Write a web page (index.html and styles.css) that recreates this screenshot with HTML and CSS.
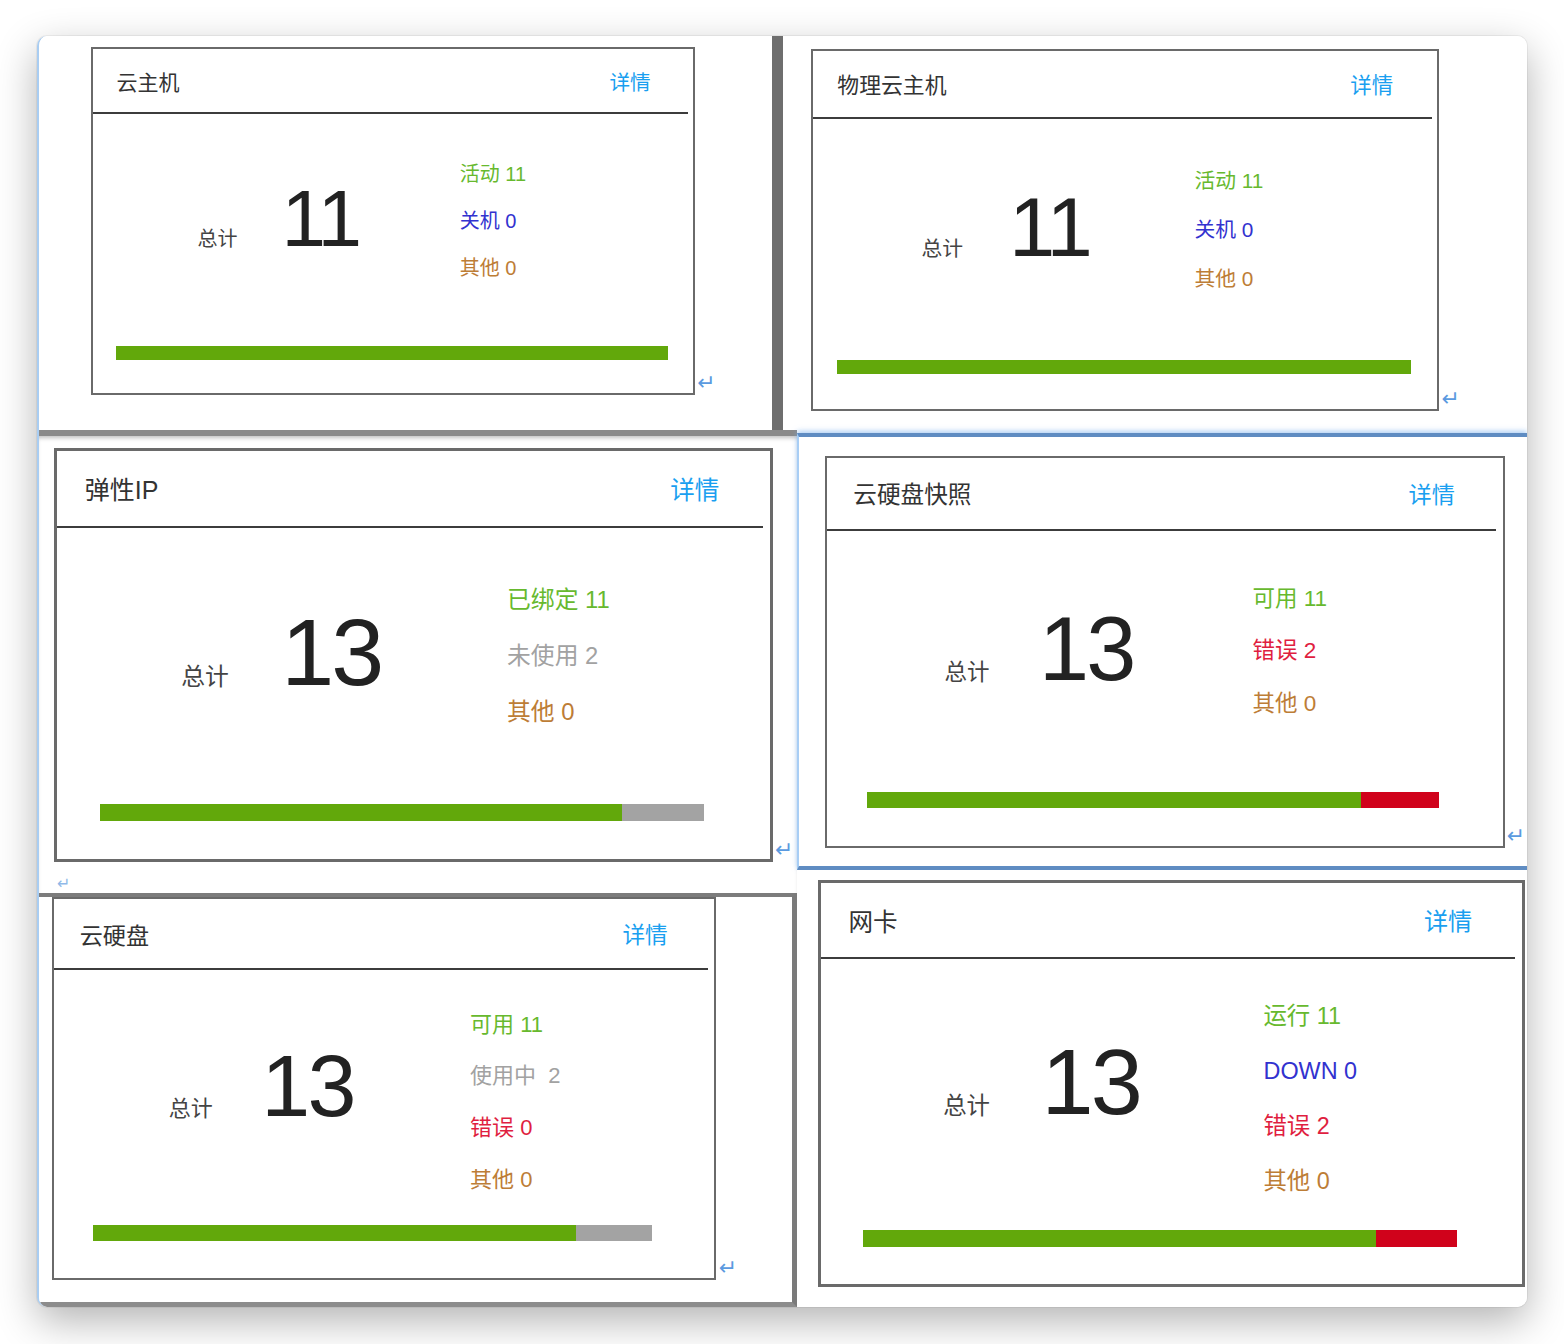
FILE: index.html
```html
<!DOCTYPE html>
<html lang="zh-CN">
<head>
    <meta charset="UTF-8">
    <meta name="viewport" content="width=device-width, initial-scale=1.0">
    <title>资源概览</title>
    <link rel="stylesheet" href="styles.css">
</head>
<body>
    <div class="window">
        <div class="row-top">
            <div class="shot shot-vm">
                <div class="card-wrap">
                    <div class="card card-vm">
                        <div class="card-head">
                            <span class="card-title">云主机</span>
                            <a href="#" class="card-link">详情</a>
                        </div>
                        <div class="card-body">
                            <div class="total">
                                <span class="total-label">总计</span>
                                <span class="total-num">11</span>
                            </div>
                            <div class="stats">
                                <div class="ok">活动 11</div>
                                <div class="off">关机 0</div>
                                <div class="other">其他 0</div>
                            </div>
                        </div>
                        <div class="bar">
                            <div class="seg-ok" style="width: 100%"></div>
                        </div>
                    </div>
                    <span class="para">↵</span>
                </div>
            </div>
            <div class="split"></div>
            <div class="shot shot-host">
                <div class="card-wrap">
                    <div class="card card-host">
                        <div class="card-head">
                            <span class="card-title">物理云主机</span>
                            <a href="#" class="card-link">详情</a>
                        </div>
                        <div class="card-body">
                            <div class="total">
                                <span class="total-label">总计</span>
                                <span class="total-num">11</span>
                            </div>
                            <div class="stats">
                                <div class="ok">活动 11</div>
                                <div class="off">关机 0</div>
                                <div class="other">其他 0</div>
                            </div>
                        </div>
                        <div class="bar">
                            <div class="seg-ok" style="width: 100%"></div>
                        </div>
                    </div>
                    <span class="para">↵</span>
                </div>
            </div>
        </div>

        <div class="row-bottom">
            <div class="col col-left">
                <div class="shot shot-eip">
                    <div class="card-wrap">
                        <div class="card card-alt card-eip">
                            <div class="card-head">
                                <span class="card-title">弹性IP</span>
                                <a href="#" class="card-link">详情</a>
                            </div>
                            <div class="card-body">
                                <div class="total">
                                    <span class="total-label">总计</span>
                                    <span class="total-num">13</span>
                                </div>
                                <div class="stats">
                                    <div class="ok">已绑定 11</div>
                                    <div class="idle">未使用 2</div>
                                    <div class="other">其他 0</div>
                                </div>
                            </div>
                            <div class="bar">
                                <div class="seg-ok" style="width: 86.5%"></div>
                                <div class="seg-idle"></div>
                            </div>
                        </div>
                        <span class="para">↵</span>
                    </div>
                    <span class="para para-faint">↵</span>
                </div>
                <div class="shot shot-disk">
                    <div class="card-wrap">
                        <div class="card card-alt card-disk">
                            <div class="card-head">
                                <span class="card-title">云硬盘</span>
                                <a href="#" class="card-link">详情</a>
                            </div>
                            <div class="card-body">
                                <div class="total">
                                    <span class="total-label">总计</span>
                                    <span class="total-num">13</span>
                                </div>
                                <div class="stats stats-long">
                                    <div class="ok">可用 11</div>
                                    <div class="idle">使用中&nbsp; 2</div>
                                    <div class="err">错误 0</div>
                                    <div class="other">其他 0</div>
                                </div>
                            </div>
                            <div class="bar">
                                <div class="seg-ok" style="width: 86.3%"></div>
                                <div class="seg-idle"></div>
                            </div>
                        </div>
                        <span class="para">↵</span>
                    </div>
                </div>
            </div>

            <div class="col col-right">
                <div class="shot shot-snap">
                    <div class="card-wrap">
                        <div class="card card-alt card-snap">
                            <div class="card-head">
                                <span class="card-title">云硬盘快照</span>
                                <a href="#" class="card-link">详情</a>
                            </div>
                            <div class="card-body">
                                <div class="total">
                                    <span class="total-label">总计</span>
                                    <span class="total-num">13</span>
                                </div>
                                <div class="stats">
                                    <div class="ok">可用 11</div>
                                    <div class="err">错误 2</div>
                                    <div class="other">其他 0</div>
                                </div>
                            </div>
                            <div class="bar">
                                <div class="seg-ok" style="width: 86.4%"></div>
                                <div class="seg-err"></div>
                            </div>
                        </div>
                        <span class="para">↵</span>
                    </div>
                </div>
                <div class="shot shot-nic">
                    <div class="card card-alt card-nic">
                        <div class="card-head">
                            <span class="card-title">网卡</span>
                            <a href="#" class="card-link">详情</a>
                        </div>
                        <div class="card-body">
                            <div class="total">
                                <span class="total-label">总计</span>
                                <span class="total-num">13</span>
                            </div>
                            <div class="stats stats-long">
                                <div class="ok">运行 11</div>
                                <div class="off">DOWN 0</div>
                                <div class="err">错误 2</div>
                                <div class="other">其他 0</div>
                            </div>
                        </div>
                        <div class="bar">
                            <div class="seg-ok" style="width: 86.3%"></div>
                            <div class="seg-err"></div>
                        </div>
                    </div>
                </div>
            </div>
        </div>
    </div>
</body>
</html>
```

FILE: styles.css
```css
html, body {
    margin: 0;
    height: 100%;
    overflow: hidden;
}
body {
    background-color: #fff;
    font-family: "Liberation Sans", "Noto Sans CJK SC", sans-serif;
}

/* the screenshot window */
.window {
    box-sizing: border-box;
    width: 1490px;
    height: 1271px;
    margin: 36px 37px;
    background-color: #fff;
    border-left: 2px solid #a9cdf2;
    border-radius: 10px;
    overflow: hidden;
    box-shadow: 0 0 0 1px rgba(0, 0, 0, 0.05), 0 14px 40px rgba(0, 0, 0, 0.3);
}
.row-top {
    display: flex;
    height: 394px;
}
.row-bottom {
    display: flex;
    height: 877px;
}
.col {
    display: flex;
    flex-direction: column;
}
.col-left {
    width: 758px;
}
.col-right {
    flex: 1;
}

/* pasted pictures */
.shot {
    box-sizing: border-box;
    background-color: #fff;
}
.shot-vm {
    width: 733px;
    padding: 11px 0 0 52px;
}
.split {
    width: 11px;
    background-color: #6e6e6e;
}
.shot-host {
    flex: 1;
    padding: 13px 0 0 28px;
}
.shot-eip {
    height: 463px;
    padding: 12px 0 0 15px;
    border-top: 6px solid #8a8a8a;
    box-shadow: inset 0 4px 4px -2px rgba(0, 0, 0, 0.25);
}
.shot-disk {
    height: 414px;
    padding: 0 0 0 13px;
    border-top: 4px solid #7c7c7c;
    border-right: 5px solid #7a7a7a;
    border-bottom: 5px solid #8c8c8c;
}
.shot-snap {
    height: 437px;
    margin-top: 3px;
    padding: 19px 0 0 26px;
    border-top: 4px solid #5f8cc2;
    border-bottom: 4px solid #5f8cc2;
    border-left: 2px solid #a7cdf5;
    box-shadow: 0 -2px 5px rgba(110, 170, 235, 0.55);
}
.shot-nic {
    flex: 1;
    padding: 10px 0 0 21px;
}

.card-wrap {
    display: flex;
    align-items: flex-end;
}
.para {
    font-family: "DejaVu Sans", sans-serif;
    font-size: 22px;
    line-height: 1;
    color: #5b9ae0;
    margin: 0 0 1px 2px;
}
.para-faint {
    display: block;
    margin: 14px 0 0 3px;
    font-size: 16px;
    color: #8fb9e8;
}

/* dashboard card, sized in em so every picture scales */
.card {
    box-sizing: border-box;
    width: 30.2em;
    height: 17.4em;
    border: 0.13em solid #6a6a6a;
    background-color: #fff;
    display: flex;
    flex-direction: column;
    flex-shrink: 0;
}
.card-vm { font-size: 20px; }
.card-host { font-size: 20.8px; }
.card-eip { font-size: 23.8px; }
.card-snap { font-size: 22.5px; }
.card-disk { font-size: 22px; }
.card-nic { font-size: 23.4px; }

.card-head {
    height: 3.15em;
    margin-right: 0.27em;
    padding: 0 1.85em 0 1.17em;
    border-bottom: 0.12em solid #3c3c3c;
    display: flex;
    align-items: center;
    justify-content: space-between;
}
.card-title {
    font-size: 1.05em;
    color: #333;
}
.card-link {
    font-size: 1.03em;
    color: #1a9ff0;
    text-decoration: none;
}
.card-body {
    height: 11.6em;
    display: flex;
}
.total {
    box-sizing: border-box;
    flex: 0 0 18.34em;
    padding: 3.24em 0 0 5.22em;
    display: flex;
    align-items: baseline;
}
.card-alt .total {
    flex-basis: 18.91em;
}
.total-label {
    color: #444;
    margin-right: 2.2em;
}
.total-num {
    font-size: 4em;
    line-height: 1;
    letter-spacing: -0.03em;
    color: #222;
}
.stats {
    padding-top: 1.85em;
    line-height: 2.35em;
    white-space: nowrap;
}
.stats-long {
    padding-top: 1.29em;
}
.ok { color: #67b92e; }
.off { color: #3232cf; }
.other { color: #bd7d36; }
.idle { color: #a2a2a2; }
.err { color: #e01e40; }

.bar {
    display: flex;
    width: 27.6em;
    height: 0.7em;
    margin-left: 1.17em;
}
.card-alt .bar {
    width: 25.4em;
    margin-left: 1.79em;
}
.seg-ok {
    background-color: #62a80b;
}
.seg-idle {
    flex: 1;
    background-color: #a3a3a3;
}
.seg-err {
    flex: 1;
    background-color: #d0021b;
}
```
